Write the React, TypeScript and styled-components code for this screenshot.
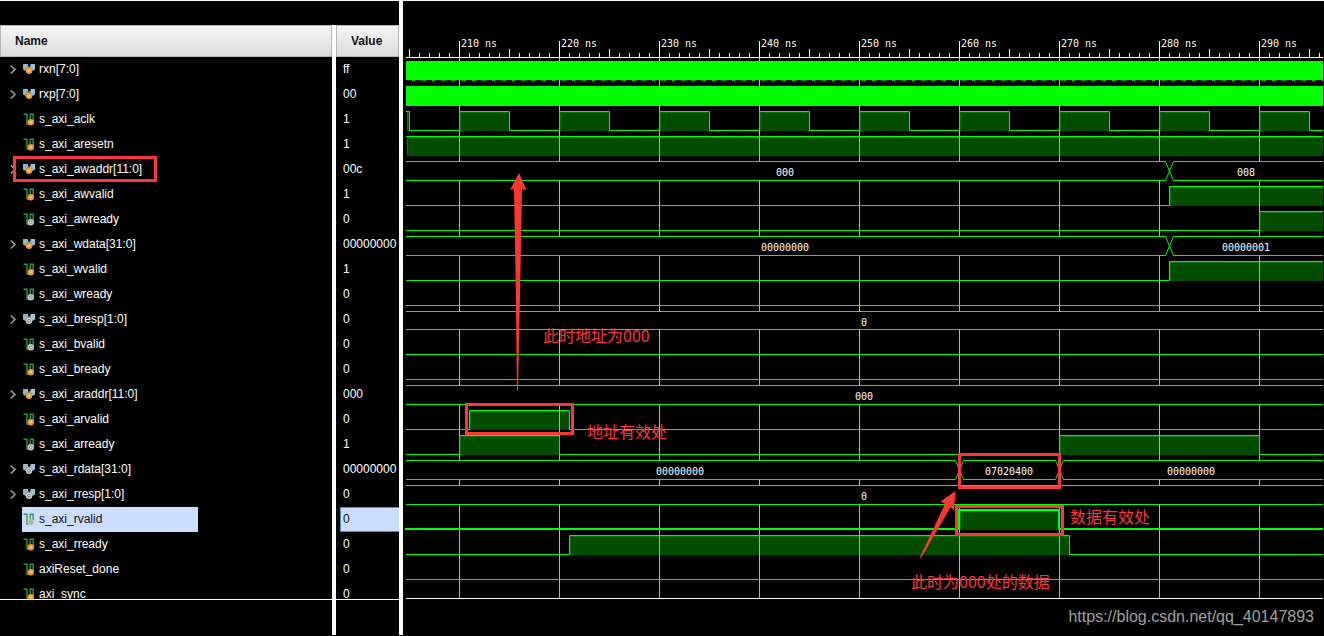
import React, { useLayoutEffect, useRef, useState } from "react";
import styled, { createGlobalStyle } from "styled-components";

const GlobalStyle = createGlobalStyle`
  * { box-sizing: border-box; }
  body { margin: 0; background: #000; }
`;

const LINE = "#00ff00";
const MARK = "#fb3833";

type Kind = "bus" | "wire";
type Dir = "in" | "out";
type Segment = { from: number; to: number };
type BusValue = { at: number; text: string };

interface Signal {
  name: string;
  value: string;
  kind: Kind;
  dir: Dir;
  selected?: boolean;
  marked?: boolean;
  solid?: boolean;
  high?: Segment[];
  cuts?: number[];
  labels?: BusValue[];
}

const BEGIN = 204.7;
const FOREVER = 600;

const clock: Segment[] = [{ from: 200, to: 205 }];
for (let t = 210; t < FOREVER; t += 10) clock.push({ from: t, to: t + 5 });

const signals: Signal[] = [
  { name: "rxn[7:0]", value: "ff", kind: "bus", dir: "in", solid: true },
  { name: "rxp[7:0]", value: "00", kind: "bus", dir: "in", solid: true },
  { name: "s_axi_aclk", value: "1", kind: "wire", dir: "in", high: clock },
  { name: "s_axi_aresetn", value: "1", kind: "wire", dir: "in", high: [{ from: 200, to: FOREVER }] },
  { name: "s_axi_awaddr[11:0]", value: "00c", kind: "bus", dir: "in", marked: true, cuts: [281], labels: [{ at: 242.6, text: "000" }, { at: 288.7, text: "008" }] },
  { name: "s_axi_awvalid", value: "1", kind: "wire", dir: "in", high: [{ from: 281, to: FOREVER }] },
  { name: "s_axi_awready", value: "0", kind: "wire", dir: "out", high: [{ from: 290, to: FOREVER }] },
  { name: "s_axi_wdata[31:0]", value: "00000000", kind: "bus", dir: "in", cuts: [281], labels: [{ at: 242.6, text: "00000000" }, { at: 288.7, text: "00000001" }] },
  { name: "s_axi_wvalid", value: "1", kind: "wire", dir: "in", high: [{ from: 281, to: FOREVER }] },
  { name: "s_axi_wready", value: "0", kind: "wire", dir: "out" },
  { name: "s_axi_bresp[1:0]", value: "0", kind: "bus", dir: "out", labels: [{ at: 250.5, text: "0" }] },
  { name: "s_axi_bvalid", value: "0", kind: "wire", dir: "out" },
  { name: "s_axi_bready", value: "0", kind: "wire", dir: "in" },
  { name: "s_axi_araddr[11:0]", value: "000", kind: "bus", dir: "in", labels: [{ at: 250.5, text: "000" }] },
  { name: "s_axi_arvalid", value: "0", kind: "wire", dir: "in", high: [{ from: 211, to: 221 }] },
  { name: "s_axi_arready", value: "1", kind: "wire", dir: "out", high: [{ from: 210, to: 220 }, { from: 270, to: 290 }] },
  { name: "s_axi_rdata[31:0]", value: "00000000", kind: "bus", dir: "out", cuts: [260, 270], labels: [{ at: 232.1, text: "00000000" }, { at: 265, text: "07020400" }, { at: 283.2, text: "00000000" }] },
  { name: "s_axi_rresp[1:0]", value: "0", kind: "bus", dir: "out", labels: [{ at: 250.5, text: "0" }] },
  { name: "s_axi_rvalid", value: "0", kind: "wire", dir: "out", selected: true, high: [{ from: 260, to: 270 }] },
  { name: "s_axi_rready", value: "0", kind: "wire", dir: "in", high: [{ from: 221, to: 271 }] },
  { name: "axiReset_done", value: "0", kind: "wire", dir: "in" },
  { name: "axi_sync", value: "0", kind: "wire", dir: "in" },
];

/* ---------- layout ---------- */

const Viewer = styled.main`
  display: grid;
  grid-template-columns: 399px 4px minmax(0, 1fr);
  min-height: 100vh;
  border-top: 1px solid #fff;
  background: #000;
  color: #fff;
  font: 12px/25px "Liberation Sans", Arial, sans-serif;
`;

const Sidebar = styled.section`
  display: grid;
  grid-template-columns: 332px 4px minmax(0, 1fr);
  padding: 24px 0 1px;
`;

const Divider = styled.div`
  background: #fff;
  margin-bottom: 1px;
`;

const InnerDivider = styled.div`
  background: #fff;
`;

const Pane = styled.div`
  height: 575px;
  overflow: hidden;
  border-bottom: 1px solid #fff;
`;

const SignalTable = styled.table`
  width: 100%;
  table-layout: fixed;
  border-collapse: separate;
  border-spacing: 0;
`;

const HeadCell = styled.th`
  height: 32px;
  padding: 0 14px;
  border: 1px solid #b4b4b4;
  background: linear-gradient(#f4f4f4, #dddde0);
  color: #111;
  text-align: left;
  font-weight: bold;
  line-height: 30px;
`;

const Cell = styled.td`
  position: relative;
  height: 25px;
  padding: 0;
  white-space: nowrap;
`;

const NameRow = styled.div`
  display: flex;
  height: 25px;
`;

const Expander = styled.button`
  width: 22px;
  padding: 0 0 0 9px;
  border: 0;
  background: none;
  display: flex;
  align-items: center;
`;

const Indent = styled.span`
  width: 22px;
`;

const NameLabel = styled.span<{ $selected?: boolean }>`
  display: flex;
  align-items: center;
  gap: 4px;
  width: 176px;
  padding-left: 1px;
  background: ${(p) => (p.$selected ? "#ccdeff" : "none")};
  color: ${(p) => (p.$selected ? "#101018" : "#fff")};
`;

const ValueLabel = styled.div<{ $selected?: boolean }>`
  height: 25px;
  margin-left: 4px;
  padding-left: 2px;
  line-height: 23px;
  border: 1px solid ${(p) => (p.$selected ? "#4a90c4" : "transparent")};
  border-right: 0;
  background: ${(p) => (p.$selected ? "#ccdeff" : "none")};
  color: ${(p) => (p.$selected ? "#101018" : "#fff")};
`;

const RowMark = styled.span`
  position: absolute;
  left: 13px;
  top: -1px;
  width: 144px;
  height: 26px;
  border: 3px solid ${MARK};
  pointer-events: none;
`;

const WavePane = styled.section`
  display: flex;
  flex-direction: column;
  padding: 0 1px 0 2px;
`;

const Chart = styled.svg`
  display: block;
  width: 100%;
  height: 598px;
  overflow: hidden;
`;

const ChartText = styled.text`
  font: 10px "DejaVu Sans Mono", monospace;
  fill: #fff;
`;

const Note = styled.text`
  font: 16px "Noto Sans CJK SC", sans-serif;
  fill: ${MARK};
`;

const Source = styled.a`
  align-self: flex-end;
  margin: 6px 9px 0 0;
  color: #a0a0a0;
  font: 16px/24px "Liberation Sans", Arial, sans-serif;
  text-decoration: none;
`;

/* ---------- icons ---------- */

const Chevron = () => (
  <svg width="8" height="9" viewBox="0 0 8 9" fill="none" stroke="#a8a8a8" strokeWidth="1.4">
    <path d="M1.8 0.5L6 4.5L1.8 8.5" />
  </svg>
);

const Port = ({ dir, cx, cy }: { dir: Dir; cx: number; cy: number }) =>
  dir === "in" ? (
    <g>
      <circle cx={cx} cy={cy} r="3.2" fill="#f3962c" />
      <path d={`M${cx - 1.2} ${cy - 0.6}l1 1.6l1.5 -2.6`} stroke="#ffe0b0" strokeWidth="1" fill="none" />
    </g>
  ) : (
    <g>
      <circle cx={cx} cy={cy} r="3.2" fill="#c8c8c8" />
      <circle cx={cx} cy={cy} r="1.3" fill="#f4f4f4" stroke="#777" strokeWidth="0.9" />
    </g>
  );

const SignalIcon = ({ kind, dir }: { kind: Kind; dir: Dir }) => (
  <svg width="12" height="13" viewBox="0 0 12 13">
    {kind === "bus" ? (
      <g>
        <path d="M0 1H5V3L6 4V8H2.5L0 6.6z" fill="#8fb6c9" />
        <path d="M12 1H7.6V3L6 4V8H9.5L12 6.6z" fill="#9cc3d6" />
        <circle cx="6" cy="7.6" r="3.7" fill="#222" fillOpacity="0.35" />
        <Port dir={dir} cx={6} cy={7.8} />
      </g>
    ) : (
      <g>
        <path d="M0.5 1.2H4V11H7.3V1.2H10.2V10" fill="none" stroke="#2f9a45" strokeWidth="1.4" />
        <Port dir={dir} cx={7.8} cy={9.2} />
      </g>
    )}
  </svg>
);

/* ---------- waveform ---------- */

const x = (ns: number) => 54 + Math.round((ns - 210) * 10);
const LEFT = 1;
const RIGHT = x(FOREVER);
const LABEL_WIDTH = 40;

const rowTop = (i: number) => 60 + 25 * i - (i > 10 ? 1 : 0);
const rowHeight = (i: number) => (i === 10 ? 18 : 19);

const Solid = ({ y, dotted }: { y: number; dotted: boolean }) => (
  <g fill={LINE}>
    <rect x={LEFT} y={y} width={RIGHT} height={dotted ? 19 : 20} />
    {dotted && <rect x={LEFT} y={y + 19} width={RIGHT} height="1" fill="url(#burst)" />}
  </g>
);

const Level = ({ y, h, high = [], bold }: { y: number; h: number; high?: Segment[]; bold?: boolean }) => {
  const hi = y + 0.5;
  const lo = y + h + 0.5;
  let d = "";
  let pen = LEFT - (bold ? 1 : 0);
  const areas: { a: number; b: number }[] = [];
  high.forEach((s) => {
    const a = Math.max(x(s.from), LEFT);
    const b = x(s.to);
    areas.push({ a, b });
    if (s.from > BEGIN) d += `M${pen} ${lo}H${a + 0.5}V${hi}H${b + 0.5}V${lo}`;
    else d += `M${a} ${hi}H${b + 0.5}V${lo}`;
    pen = b;
  });
  d += `M${pen} ${lo}H${RIGHT}`;
  return (
    <g>
      {areas.map(({ a, b }) => (
        <g key={a}>
          <rect x={a + 1} y={y + 1} width={b - a - 1} height={h} fill={LINE} fillOpacity="0.3" />
          <path d={`M${a + 1.5} ${lo}V${y + 1.5}H${b}`} fill="none" stroke={LINE} strokeOpacity="0.25" />
        </g>
      ))}
      <path d={d} fill="none" stroke={LINE} strokeWidth={bold ? 2 : 1} transform={bold ? "translate(-0.5 -0.5)" : undefined} />
    </g>
  );
};

const Bus = ({ y, h, cuts = [], labels = [] }: { y: number; h: number; cuts?: number[]; labels?: BusValue[] }) => {
  const hi = y + 0.5;
  const lo = y + h + 0.5;
  let up = `M${LEFT} ${hi}`;
  let down = `M${LEFT} ${lo}`;
  cuts.forEach((c, i) => {
    const a = x(c) - 3.5;
    const b = x(c) + 4.5;
    const flip = i % 2 === 0;
    up += `H${a}L${b} ${flip ? lo : hi}`;
    down += `H${a}L${b} ${flip ? hi : lo}`;
  });
  up += `H${RIGHT}`;
  down += `H${RIGHT}`;
  return (
    <g>
      <rect x={LEFT} y={y} width={RIGHT} height={h} fill="#000" />
      <path d={up + down} fill="none" stroke={LINE} />
      {labels.map((l) => (
        <ChartText key={l.at} x={x(l.at)} y={y + 15} textAnchor="middle">
          {l.text}
        </ChartText>
      ))}
    </g>
  );
};

const ticks: number[] = [];
for (let t = 205; t < FOREVER; t += 1) ticks.push(t);
const majors = ticks.filter((t) => t % 10 === 0);

const Ruler = ({ width }: { width: number }) => (
  <g>
    <g fill="#fff">
      <rect x={LEFT} y="56" width={RIGHT} height="1" />
      {ticks.map((t) => {
        const top = t % 10 === 0 ? 40 : t % 5 === 0 ? 48 : 52;
        return <rect key={t} x={x(t)} y={top} width="1" height={56 - top} />;
      })}
    </g>
    {majors
      .filter((t) => x(t) + LABEL_WIDTH < width)
      .map((t) => (
        <ChartText key={t} x={x(t) + 2} y="46">
          {`${t} ns`}
        </ChartText>
      ))}
  </g>
);

const Notes = () => (
  <g>
    <g fill="none" stroke={MARK} strokeWidth="3">
      <rect x="61.5" y="403.5" width="106" height="29" />
      <rect x="554.5" y="453.5" width="100" height="33" />
      <rect x="551.5" y="505.5" width="106" height="28" />
    </g>
    <g fill={MARK}>
      <path d="M114 172L121.5 189L117 188L115.5 270L113 389.5H112L110.5 270L109 188L105 189z" />
      <path d="M550.5 490L549 509L545.5 506.5L516 557L515 556L540 503L535.5 500.5z" />
    </g>
    <Note x="138" y="341">此时地址为000</Note>
    <Note x="182" y="437">地址有效处</Note>
    <Note x="665" y="522">数据有效处</Note>
    <Note x="506" y="587">此时为000处的数据</Note>
  </g>
);

const Waveform = () => {
  const ref = useRef<SVGSVGElement>(null);
  const [width, setWidth] = useState(0);

  useLayoutEffect(() => {
    const measure = () => setWidth(ref.current ? ref.current.getBoundingClientRect().width : 0);
    measure();
    window.addEventListener("resize", measure);
    return () => window.removeEventListener("resize", measure);
  }, []);

  return (
    <Chart ref={ref} role="img" aria-label="Waveform">
      <defs>
        <pattern id="burst" x="7" y="0" width="10" height="1" patternUnits="userSpaceOnUse">
          <rect width="1" height="1" fill={LINE} />
          <rect x="2" width="1" height="1" fill={LINE} />
        </pattern>
      </defs>
      {majors.map((t) => (
        <rect key={t} x={x(t)} y="57" width="1" height="541" fill="#b8b8b8" />
      ))}
      <Ruler width={width} />
      {signals.map((s, i) => {
        const y = rowTop(i);
        const h = rowHeight(i);
        if (s.solid) return <Solid key={s.name} y={y} dotted={i === 0} />;
        if (s.kind === "bus") return <Bus key={s.name} y={y} h={h} cuts={s.cuts} labels={s.labels} />;
        return <Level key={s.name} y={y} h={h} high={s.high} bold={s.selected} />;
      })}
      <rect x={LEFT} y="597" width={RIGHT} height="1" fill="#fff" />
      <Notes />
    </Chart>
  );
};

/* ---------- page ---------- */

export default function App() {
  return (
    <Viewer>
      <GlobalStyle />
      <Sidebar>
        <Pane>
          <SignalTable aria-label="Signal names">
            <thead>
              <tr>
                <HeadCell scope="col">Name</HeadCell>
              </tr>
            </thead>
            <tbody>
              {signals.map((s) => (
                <tr key={s.name}>
                  <Cell>
                    <NameRow>
                      {s.kind === "bus" ? (
                        <Expander type="button" aria-label={`Expand ${s.name}`}>
                          <Chevron />
                        </Expander>
                      ) : (
                        <Indent />
                      )}
                      <NameLabel $selected={s.selected}>
                        <SignalIcon kind={s.kind} dir={s.dir} />
                        {s.name}
                      </NameLabel>
                    </NameRow>
                    {s.marked && <RowMark />}
                  </Cell>
                </tr>
              ))}
            </tbody>
          </SignalTable>
        </Pane>
        <InnerDivider />
        <Pane>
          <SignalTable aria-label="Signal values">
            <thead>
              <tr>
                <HeadCell scope="col">Value</HeadCell>
              </tr>
            </thead>
            <tbody>
              {signals.map((s) => (
                <tr key={s.name}>
                  <Cell>
                    <ValueLabel $selected={s.selected}>{s.value}</ValueLabel>
                  </Cell>
                </tr>
              ))}
            </tbody>
          </SignalTable>
        </Pane>
      </Sidebar>
      <Divider />
      <WavePane>
        <Waveform />
        <Source href="https://blog.csdn.net/qq_40147893">https://blog.csdn.net/qq_40147893</Source>
      </WavePane>
    </Viewer>
  );
}
